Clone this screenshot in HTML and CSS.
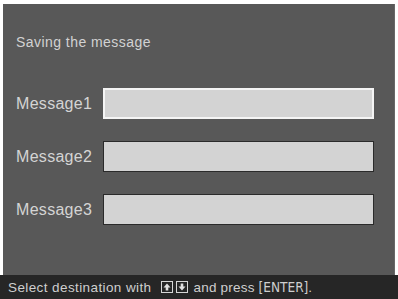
FILE: index.html
```html
<!DOCTYPE html>
<html>
<head>
<meta charset="utf-8">
<link rel="stylesheet" href="styles.css">
</head>
<body>
<div class="screen">
  <div class="panel">
    <div class="title">Saving the message</div>
    <div class="rows">
      <div class="row">
        <div class="label">Message1</div>
        <div class="field selected"></div>
      </div>
      <div class="row">
        <div class="label">Message2</div>
        <div class="field"></div>
      </div>
      <div class="row">
        <div class="label">Message3</div>
        <div class="field"></div>
      </div>
    </div>
  </div>
  <div class="status">
    <span class="txt">Select destination with</span>
    <span class="keys">
      <svg class="key" width="12" height="12" viewBox="0 0 12 12"><rect x="0.5" y="0.5" width="11" height="11" fill="none" stroke="#d6d6d6" stroke-width="1"/><path d="M6 2.5 L9.5 6.5 H7.3 V9.5 H4.7 V6.5 H2.5 Z" fill="#e0e0e0"/></svg>
      <svg class="key" width="12" height="12" viewBox="0 0 12 12"><rect x="0.5" y="0.5" width="11" height="11" fill="none" stroke="#d6d6d6" stroke-width="1"/><path d="M6 9.5 L9.5 5.5 H7.3 V2.5 H4.7 V5.5 H2.5 Z" fill="#e0e0e0"/></svg>
    </span>
    <span class="txt tail">and press <span class="cond">[ENTER]</span>.</span>
  </div>
</div>
</body>
</html>
```
FILE: styles.css
```css
html, body {
  margin: 0;
  padding: 0;
  background: #ffffff;
}
body {
  width: 398px;
  height: 299px;
  overflow: hidden;
  font-family: "Liberation Sans", Arial, sans-serif;
}
.screen {
  margin: 4px 3px 0 3px;
  height: 295px;
  display: flex;
  flex-direction: column;
}
.panel {
  flex: 0 0 271px;
  background: #585858;
  border-right: 1px solid #686868;
  padding: 30px 20px 0 13px;
  box-sizing: border-box;
}
.title {
  font-size: 14px;
  line-height: 17px;
  color: #d2d2d2;
  letter-spacing: 0.45px;
}
.rows {
  margin-top: 37px;
  display: flex;
  flex-direction: column;
  gap: 22px;
}
.row {
  display: flex;
  align-items: center;
}
.label {
  width: 87px;
  font-size: 16px;
  color: #d4d4d4;
  letter-spacing: 0.3px;
}
.field {
  flex: 1;
  height: 31px;
  box-sizing: border-box;
  background: #d3d3d3;
  border: 1px solid #2a2a2a;
}
.field.selected {
  border: 2px solid #f4f4f4;
}
.status {
  flex: 1;
  background: #262626;
  margin: 0 -3px;
  padding-left: 8px;
  display: flex;
  align-items: center;
  gap: 6px;
  font-size: 13.5px;
  color: #cfcfcf;
  letter-spacing: 0.4px;
}
.keys {
  display: flex;
  gap: 3px;
  margin: 0 0 0 3px;
}
.key {
  display: block;
}
.tail {
  letter-spacing: 0.2px;
}
.cond {
  font-family: "DejaVu Sans Condensed", "Liberation Sans Narrow", sans-serif;
  letter-spacing: 0;
}
```
